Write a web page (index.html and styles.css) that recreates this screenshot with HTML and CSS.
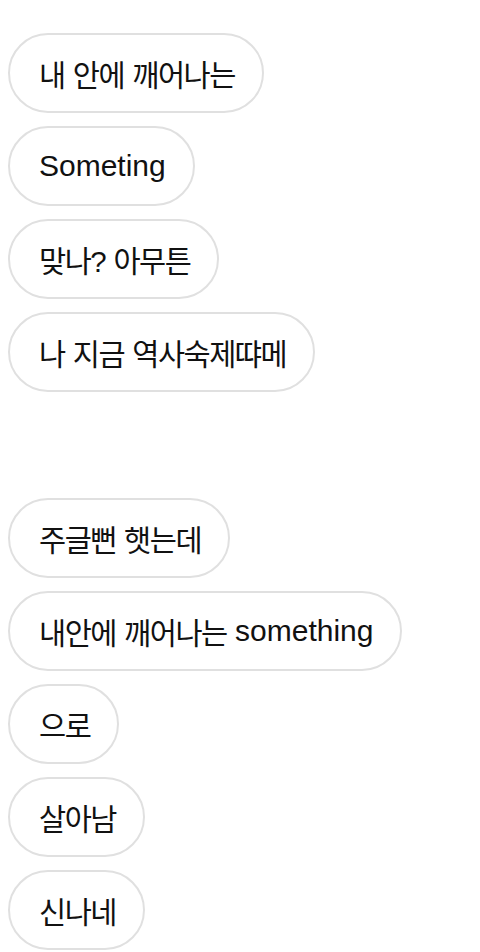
FILE: index.html
```html
<!DOCTYPE html>
<html lang="ko">
<head>
<meta charset="utf-8">
<link rel="stylesheet" href="styles.css">
</head>
<body>
<div class="chat">
  <div class="group">
    <div class="bubble"><span class="ko">내 안에 깨어나는</span></div>
    <div class="bubble">Someting</div>
    <div class="bubble"><span class="ko">맞나? 아무튼</span></div>
    <div class="bubble"><span class="ko">나 지금 역사숙제땨메</span></div>
  </div>
  <div class="group">
    <div class="bubble"><span class="ko">주글뻔 햇는데</span></div>
    <div class="bubble"><span class="ko">내안에 깨어나는</span> something</div>
    <div class="bubble"><span class="ko">으로</span></div>
    <div class="bubble"><span class="ko">살아남</span></div>
    <div class="bubble"><span class="ko">신나네</span></div>
  </div>
</div>
</body>
</html>
```
FILE: styles.css
```css
html, body {
  margin: 0;
  padding: 0;
  background: #ffffff;
}
.chat {
  display: flex;
  flex-direction: column;
  gap: 106px;
  padding: 33px 0 0 8px;
  font-family: "Liberation Sans", "Noto Sans CJK KR", sans-serif;
  font-size: 30px;
  color: #111111;
}
.group {
  display: flex;
  flex-direction: column;
  align-items: flex-start;
  gap: 13px;
}
.bubble {
  box-sizing: border-box;
  height: 80px;
  display: flex;
  align-items: center;
  padding: 0 27px 0 29px;
  border: 2px solid #e0e0e0;
  border-radius: 40px;
  white-space: pre;
}
.ko {
  font-size: 29.5px;
  letter-spacing: -1.5px;
  word-spacing: 1.5px;
}
```
